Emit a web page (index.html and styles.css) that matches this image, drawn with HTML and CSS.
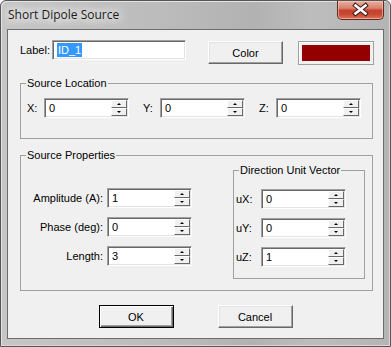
FILE: index.html
```html
<!DOCTYPE html>
<html lang="en">
<head>
    <meta charset="UTF-8">
    <title>Short Dipole Source</title>
    <link rel="stylesheet" href="styles.css">
</head>
<body>
    <div class="window">
        <div class="titlebar">
            <span class="title">Short Dipole Source</span>
            <div class="close">
                <svg width="45" height="17" viewBox="0 0 45 17">
                    <path d="M17.5 4.5 L27.5 12.5 M27.5 4.5 L17.5 12.5" stroke="#3b1a15" stroke-width="4.6" stroke-linecap="square"/>
                    <path d="M17.5 4.5 L27.5 12.5 M27.5 4.5 L17.5 12.5" stroke="#fff" stroke-width="2.6" stroke-linecap="square"/>
                </svg>
            </div>
        </div>
        <div class="client">
            <div class="top-row">
                <span class="top-label">Label:</span>
                <div class="edit label-edit"><span class="sel">ID_1</span></div>
                <button class="btn color-btn">Color</button>
                <div class="swatch"><div class="swatch-fill"></div></div>
            </div>

            <fieldset class="group loc">
                <legend>Source Location</legend>
                <div class="loc-row">
                    <span class="loc-label">X:</span>
                    <div class="spin"><span class="val">0</span><span class="arrows"><span class="up"></span><span class="dn"></span></span></div>
                    <span class="loc-label">Y:</span>
                    <div class="spin"><span class="val">0</span><span class="arrows"><span class="up"></span><span class="dn"></span></span></div>
                    <span class="loc-label">Z:</span>
                    <div class="spin"><span class="val">0</span><span class="arrows"><span class="up"></span><span class="dn"></span></span></div>
                </div>
            </fieldset>

            <fieldset class="group props">
                <legend>Source Properties</legend>
                <div class="props-body">
                    <div class="prop-grid">
                        <span class="prop-label">Amplitude (A):</span>
                        <div class="spin"><span class="val">1</span><span class="arrows"><span class="up"></span><span class="dn"></span></span></div>
                        <span class="prop-label">Phase (deg):</span>
                        <div class="spin"><span class="val">0</span><span class="arrows"><span class="up"></span><span class="dn"></span></span></div>
                        <span class="prop-label">Length:</span>
                        <div class="spin"><span class="val">3</span><span class="arrows"><span class="up"></span><span class="dn"></span></span></div>
                    </div>
                    <fieldset class="group dir">
                        <legend>Direction Unit Vector</legend>
                        <div class="dir-grid">
                            <span class="dir-label">uX:</span>
                            <div class="spin"><span class="val">0</span><span class="arrows"><span class="up"></span><span class="dn"></span></span></div>
                            <span class="dir-label">uY:</span>
                            <div class="spin"><span class="val">0</span><span class="arrows"><span class="up"></span><span class="dn"></span></span></div>
                            <span class="dir-label">uZ:</span>
                            <div class="spin"><span class="val">1</span><span class="arrows"><span class="up"></span><span class="dn"></span></span></div>
                        </div>
                    </fieldset>
                </div>
            </fieldset>

            <div class="buttons">
                <button class="btn default">OK</button>
                <button class="btn">Cancel</button>
            </div>
        </div>
    </div>
</body>
</html>
```

FILE: styles.css
```css
body {
    margin: 0;
    background: #fff;
    font-family: "Liberation Sans", Arial, sans-serif;
    font-size: 11px;
    color: #000;
}
.window {
    width: 391px;
    height: 347px;
    box-sizing: border-box;
    border: 1px solid #555;
    border-radius: 6px 6px 0 0;
    background: linear-gradient(90deg, #c6c6c6, #bcbcbc 40%, #b2b2b2 65%, #bdbdbd 80%, #b4b4b4);
    box-shadow: inset 1px 1px 0 #e4e4e4, inset -1px -1px 0 #d8d8d8;
    display: flex;
    flex-direction: column;
}
.titlebar {
    height: 28px;
    display: flex;
    align-items: flex-start;
    flex-shrink: 0;
}
.title {
    font-family: "Open Sans", sans-serif;
    font-size: 12px;
    line-height: 16px;
    margin: 6px 0 0 7px;
    color: #1b1b1b;
    text-shadow: 0 0 8px #fff, 0 0 12px #fff, 0 0 14px #fff;
}
.close {
    margin-left: auto;
    margin-right: 6px;
    width: 47px;
    height: 19px;
    box-sizing: border-box;
    border: 1px solid #5e2c24;
    border-top: none;
    border-radius: 0 0 5px 5px;
    background: linear-gradient(#eab0a2, #d9806c 40%, #c3412d 52%, #c84a33 75%, #e0735a);
    box-shadow: inset 0 0 0 1px rgba(255, 210, 195, 0.55);
}
.close svg {
    display: block;
}
.client {
    height: 310px;
    box-sizing: border-box;
    margin: 0 6px 7px 6px;
    border: 1px solid #6c6c6c;
    background: #f0f0f0;
}

/* top row */
.top-row {
    display: flex;
    align-items: flex-start;
    padding: 10px 0 0 12px;
    height: 25px;
}
.top-label {
    width: 32px;
    line-height: 20px;
}
.edit {
    box-sizing: border-box;
    height: 20px;
    background: #fff;
    border: 1px solid;
    border-color: #a0a0a0 #fff #fff #a0a0a0;
    box-shadow: inset 1px 1px 0 #696969, inset -1px -1px 0 #e3e3e3;
}
.label-edit {
    width: 134px;
    padding: 2px 0 0 4px;
}
.sel {
    display: inline-block;
    background: #3399ff;
    color: #fff;
    line-height: 14px;
    padding: 0 1px;
}
.btn {
    box-sizing: border-box;
    width: 75px;
    height: 23px;
    padding: 0;
    font-family: inherit;
    font-size: 11px;
    color: #000;
    background: #f0f0f0;
    border: 1px solid;
    border-color: #fff #696969 #696969 #fff;
    box-shadow: inset -1px -1px 0 #a0a0a0, inset 1px 1px 0 #e3e3e3;
}
.btn.default {
    border-color: #000;
    box-shadow: inset 1px 1px 0 #fff, inset -1px -1px 0 #696969, inset -2px -2px 0 #a0a0a0;
}
.color-btn {
    margin: 1px 0 0 22px;
}
.swatch {
    box-sizing: border-box;
    width: 76px;
    height: 24px;
    margin: 1px 0 0 15px;
    padding: 3px;
    border: 1px solid #a0a0a0;
    box-shadow: inset 1px 1px 0 #fff;
}
.swatch-fill {
    height: 100%;
    background: #920000;
}

/* group boxes */
.group {
    margin: 0;
    padding: 0;
    border: 1px solid #a0a0a0;
    min-width: 0;
}
.group legend {
    margin-left: 5px;
    padding: 0 1px;
    line-height: 13px;
}
.loc {
    margin: 12px 10px 0 12px;
}
.loc-row {
    display: flex;
    align-items: center;
    gap: 14px;
    padding: 8px 0 20px 6px;
}
.loc-label {
    width: 17px;
    margin-right: -14px;
}
.props {
    margin: 10px 10px 0 12px;
}
.props-body {
    display: flex;
    align-items: flex-start;
    padding-bottom: 11px;
}
.prop-grid {
    display: grid;
    grid-template-columns: 82px 85px;
    column-gap: 4px;
    row-gap: 9px;
    margin-top: 26px;
}
.prop-label {
    text-align: right;
    line-height: 20px;
}
.dir {
    width: 130px;
    margin: 2px 0 0 41px;
}
.dir-grid {
    display: grid;
    grid-template-columns: 25px 85px;
    row-gap: 9px;
    padding: 12px 0 11px 2px;
}
.dir-label {
    line-height: 20px;
}

/* spin boxes */
.spin {
    box-sizing: border-box;
    width: 85px;
    height: 20px;
    display: flex;
    padding: 1px;
    background: #fff;
    border: 1px solid;
    border-color: #a0a0a0 #fff #fff #a0a0a0;
    box-shadow: inset 1px 1px 0 #696969, inset -1px -1px 0 #e3e3e3;
}
.val {
    flex: 1;
    padding-left: 3px;
    line-height: 16px;
}
.arrows {
    width: 16px;
    display: flex;
    flex-direction: column;
}
.up, .dn {
    box-sizing: border-box;
    height: 8px;
    background: #f0f0f0;
    border: 1px solid;
    border-color: #fff #696969 #696969 #fff;
    display: flex;
    align-items: center;
    justify-content: center;
}
.up::after, .dn::after {
    content: "";
    width: 0;
    height: 0;
    border-left: 2px solid transparent;
    border-right: 2px solid transparent;
}
.up::after {
    border-bottom: 2px solid #000;
}
.dn::after {
    border-top: 2px solid #000;
}

/* bottom buttons */
.buttons {
    display: flex;
    justify-content: center;
    gap: 44px;
    margin-top: 14px;
}
```
